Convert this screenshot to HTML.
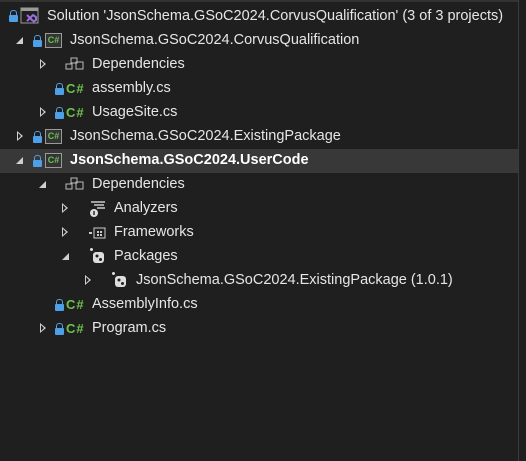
<!DOCTYPE html>
<html><head><style>
body{margin:0;width:526px;height:461px;background:#1f1f1f;overflow:hidden;font-family:"Liberation Sans",sans-serif;font-size:14.5px;color:#e6e6e6;position:relative}
.top{position:absolute;left:0;top:0;width:518px;height:2px;background:#333}
.sb{position:absolute;left:518px;top:0;width:1px;height:461px;background:#3a3a3a}
.sel{position:absolute;left:0;top:149px;width:518px;height:24px;background:#383838}
.t{position:absolute;white-space:nowrap}
.exp{position:absolute;width:0;height:0}
.c{border-top:5px solid transparent;border-bottom:5px solid transparent;border-left:6px solid #cfcfcf;}
.c::after{content:"";position:absolute;left:-5px;top:-3px;border-top:3px solid transparent;border-bottom:3px solid transparent;border-left:3px solid #1f1f1f}
.o{border-left:7px solid transparent;border-bottom:7px solid #cfcfcf}
.lock{position:absolute;width:9px;height:7px;background:#4e9ee8;border-radius:1px}
.lock::before{content:"";position:absolute;left:1px;top:-5px;width:5px;height:4px;border:1.5px solid #4e9ee8;border-bottom:none;border-radius:3px 3px 0 0}
.proj{position:absolute;width:15px;height:13px;border:1px solid #9a9a9a;background:#333;color:#6fbf5a;font-size:9px;font-weight:bold;line-height:13px;text-align:center}
.cs{position:absolute;color:#6cc24a;font-size:13px;font-weight:bold;letter-spacing:1px}
</style></head><body>
<div class="top"></div><div class="sb"></div><div class="sel"></div>

<div class="lock" style="left:9px;top:15px"></div>
<svg style="position:absolute;left:20px;top:6px" width="20" height="20"><rect x="1" y="2" width="17" height="15" fill="none" stroke="#9a9a9a"/><rect x="1" y="2" width="17" height="3" fill="#9a9a9a"/><path d="M7 9 L13 15 M7 15 L13 9 L16 11 L16 14 L13 16" stroke="#9a6fe0" stroke-width="2" fill="none"/></svg>
<div class="t" style="left:47px;top:8px">Solution 'JsonSchema.GSoC2024.CorvusQualification' (3 of 3 projects)</div>

<div class="exp o" style="left:16px;top:37px"></div>
<div class="lock" style="left:33px;top:40px"></div>
<div class="proj" style="left:45px;top:33px">C#</div>
<div class="t" style="left:70px;top:32px">JsonSchema.GSoC2024.CorvusQualification</div>

<div class="exp c" style="left:40px;top:59px"></div>
<svg style="position:absolute;left:65px;top:57px" width="20" height="14"><rect x="1" y="7" width="6" height="5" fill="none" stroke="#bbb"/><rect x="11" y="5" width="7" height="7" fill="none" stroke="#bbb"/><rect x="6" y="1" width="6" height="5" fill="none" stroke="#bbb"/></svg>
<div class="t" style="left:92px;top:56px">Dependencies</div>

<div class="lock" style="left:55px;top:88px"></div>
<div class="cs" style="left:66px;top:81px">C#</div>
<div class="t" style="left:92px;top:80px">assembly.cs</div>

<div class="exp c" style="left:40px;top:107px"></div>
<div class="lock" style="left:55px;top:112px"></div>
<div class="cs" style="left:66px;top:105px">C#</div>
<div class="t" style="left:92px;top:104px">UsageSite.cs</div>

<div class="exp c" style="left:17px;top:131px"></div>
<div class="lock" style="left:33px;top:136px"></div>
<div class="proj" style="left:45px;top:129px">C#</div>
<div class="t" style="left:70px;top:128px">JsonSchema.GSoC2024.ExistingPackage</div>

<div class="exp o" style="left:16px;top:157px"></div>
<div class="lock" style="left:33px;top:160px"></div>
<div class="proj" style="left:45px;top:153px">C#</div>
<div class="t" style="left:70px;top:152px;font-weight:bold;color:#fff">JsonSchema.GSoC2024.UserCode</div>

<div class="exp o" style="left:39px;top:181px"></div>
<svg style="position:absolute;left:65px;top:177px" width="20" height="14"><rect x="1" y="7" width="6" height="5" fill="none" stroke="#bbb"/><rect x="11" y="5" width="7" height="7" fill="none" stroke="#bbb"/><rect x="6" y="1" width="6" height="5" fill="none" stroke="#bbb"/></svg>
<div class="t" style="left:92px;top:176px">Dependencies</div>

<div class="exp c" style="left:62px;top:203px"></div>
<svg style="position:absolute;left:88px;top:200px" width="20" height="18"><path d="M3 2h14M6 5h10M9 8h8" stroke="#ccc" stroke-width="1.5"/><circle cx="6" cy="13" r="4" fill="#ddd"/><rect x="5.3" y="11" width="1.4" height="4" fill="#1f1f1f"/></svg>
<div class="t" style="left:114px;top:200px">Analyzers</div>

<div class="exp c" style="left:62px;top:227px"></div>
<svg style="position:absolute;left:88px;top:226px" width="20" height="14"><rect x="1" y="6" width="3" height="2" fill="#ccc"/><rect x="6" y="2" width="11" height="10" fill="none" stroke="#ccc"/><rect x="9" y="5" width="2" height="2" fill="#ccc"/><rect x="12" y="5" width="2" height="2" fill="#ccc"/><rect x="9" y="8" width="2" height="2" fill="#ccc"/><rect x="12" y="8" width="2" height="2" fill="#ccc"/></svg>
<div class="t" style="left:114px;top:224px">Frameworks</div>

<div class="exp o" style="left:62px;top:253px"></div>
<svg style="position:absolute;left:89px;top:247px" width="18" height="18"><circle cx="2.5" cy="2.5" r="1.5" fill="#ddd"/><rect x="4" y="5" width="11" height="11" rx="3" fill="#ddd"/><circle cx="8" cy="9" r="1.5" fill="#1f1f1f"/><circle cx="11.5" cy="12.5" r="1.5" fill="#1f1f1f"/></svg>
<div class="t" style="left:114px;top:248px">Packages</div>

<div class="exp c" style="left:85px;top:275px"></div>
<svg style="position:absolute;left:111px;top:271px" width="18" height="18"><circle cx="2.5" cy="2.5" r="1.5" fill="#ddd"/><rect x="4" y="5" width="11" height="11" rx="3" fill="#ddd"/><circle cx="8" cy="9" r="1.5" fill="#1f1f1f"/><circle cx="11.5" cy="12.5" r="1.5" fill="#1f1f1f"/></svg>
<div class="t" style="left:136px;top:272px">JsonSchema.GSoC2024.ExistingPackage (1.0.1)</div>

<div class="lock" style="left:55px;top:304px"></div>
<div class="cs" style="left:66px;top:297px">C#</div>
<div class="t" style="left:92px;top:296px">AssemblyInfo.cs</div>

<div class="exp c" style="left:40px;top:323px"></div>
<div class="lock" style="left:55px;top:328px"></div>
<div class="cs" style="left:66px;top:321px">C#</div>
<div class="t" style="left:92px;top:320px">Program.cs</div>
</body></html>
